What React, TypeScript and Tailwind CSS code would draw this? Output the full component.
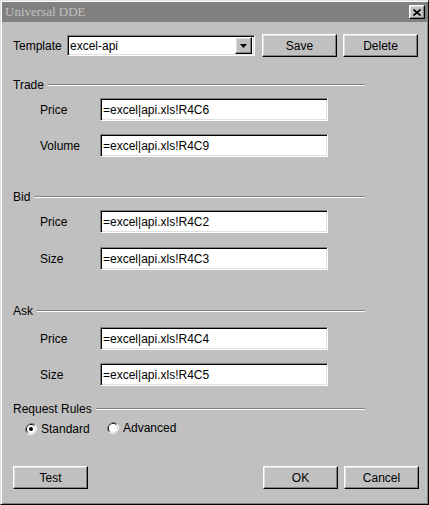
import React from "react";

const font = { fontFamily: '"Liberation Sans", Arial, sans-serif' };

const raised =
  "bg-[#c0c0c0] border border-t-white border-l-white border-r-black border-b-black shadow-[inset_-1px_-1px_#808080,inset_1px_1px_#dfdfdf]";
const sunken =
  "bg-white border border-t-[#808080] border-l-[#808080] border-r-white border-b-white shadow-[inset_1px_1px_#000,inset_-1px_-1px_#dfdfdf]";

function Button({ text, className = "" }: { text: string; className?: string }) {
  return (
    <button
      className={`${raised} h-[23px] w-[75px] text-[12px] text-black flex items-center justify-center ${className}`}
    >
      {text}
    </button>
  );
}

function GroupHeader({ title }: { title: string }) {
  return (
    <div className="flex items-center h-[14px] w-[352px]">
      <span className="text-[12px] text-black leading-none">{title}</span>
      <div className="flex-1 ml-[4px] h-[2px] border-t border-t-[#808080] border-b border-b-white" />
    </div>
  );
}

function Field({ label, value, className = "" }: { label: string; value: string; className?: string }) {
  return (
    <div className={`flex items-center pl-[27px] ${className}`}>
      <span className="w-[60px] text-[12px] text-black">{label}</span>
      <div className={`${sunken} w-[228px] h-[23px] flex items-center pl-[2px] text-[12px] text-black`}>
        {value}
      </div>
    </div>
  );
}

function Radio({ checked, label }: { checked?: boolean; label: string }) {
  return (
    <div className="flex items-center gap-[4px]">
      <svg width="12" height="12" viewBox="0 0 12 12">
        <path d="M10.2 1.8A6 6 0 0 0 1.8 10.2" stroke="#808080" strokeWidth="1" fill="none" />
        <path d="M9.5 2.5A5 5 0 0 0 2.5 9.5" stroke="#000" strokeWidth="1" fill="none" />
        <path d="M1.8 10.2A6 6 0 0 0 10.2 1.8" stroke="#fff" strokeWidth="1" fill="none" />
        <path d="M2.5 9.5A5 5 0 0 0 9.5 2.5" stroke="#dfdfdf" strokeWidth="1" fill="none" />
        <circle cx="6" cy="6" r="4" fill="#fff" />
        {checked && <circle cx="6" cy="6" r="2" fill="#000" />}
      </svg>
      <span className="text-[12px] text-black">{label}</span>
    </div>
  );
}

export default function App() {
  return (
    <div
      style={font}
      className="w-[429px] h-[505px] bg-[#c0c0c0] border border-t-[#dfdfdf] border-l-[#dfdfdf] border-r-black border-b-black shadow-[inset_1px_1px_#fff,inset_-1px_-1px_#808080] p-[1px] flex flex-col"
    >
      {/* Title bar */}
      <div className="h-[20px] bg-[#808080] flex items-center justify-between pl-[3px] pr-[2px]">
        <span
          className="text-[13px] text-[#c0c0c0]"
          style={{ fontFamily: '"Liberation Serif", "Times New Roman", serif' }}
        >
          Universal DDE
        </span>
        <div className={`${raised} w-[16px] h-[14px] flex items-center justify-center`}>
          <svg width="8" height="7" viewBox="0 0 8 7">
            <path d="M0.5 0.5L7.5 6.5M7.5 0.5L0.5 6.5" stroke="#000" strokeWidth="1.6" />
          </svg>
        </div>
      </div>

      <div className="flex flex-col pl-[11px]">
        {/* Template row */}
        <div className="flex items-center mt-[12px]">
          <span className="w-[54px] text-[12px] text-black">Template</span>
          <div className={`${sunken} w-[188px] h-[21px] flex items-center justify-between pl-[2px] pr-[2px]`}>
            <span className="text-[12px] text-black">excel-api</span>
            <div className={`${raised} w-[17px] h-[17px] flex items-center justify-center`}>
              <svg width="7" height="4" viewBox="0 0 7 4">
                <path d="M0 0H7L3.5 4Z" fill="#000" />
              </svg>
            </div>
          </div>
          <Button text="Save" className="ml-[7px]" />
          <Button text="Delete" className="ml-[6px]" />
        </div>

        {/* Trade */}
        <div className="mt-[21px]">
          <GroupHeader title="Trade" />
        </div>
        <Field label="Price" value="=excel|api.xls!R4C6" className="mt-[6px]" />
        <Field label="Volume" value="=excel|api.xls!R4C9" className="mt-[13px]" />

        {/* Bid */}
        <div className="mt-[33px]">
          <GroupHeader title="Bid" />
        </div>
        <Field label="Price" value="=excel|api.xls!R4C2" className="mt-[6px]" />
        <Field label="Size" value="=excel|api.xls!R4C3" className="mt-[14px]" />

        {/* Ask */}
        <div className="mt-[34px]">
          <GroupHeader title="Ask" />
        </div>
        <Field label="Price" value="=excel|api.xls!R4C4" className="mt-[9px]" />
        <Field label="Size" value="=excel|api.xls!R4C5" className="mt-[13px]" />

        {/* Request rules */}
        <div className="mt-[16px]">
          <GroupHeader title="Request Rules" />
        </div>
        <div className="flex items-center mt-[6px] pl-[12px] h-[14px]">
          <div className="w-[82px]">
            <Radio checked label="Standard" />
          </div>
          <div className="-mt-[3px]">
            <Radio label="Advanced" />
          </div>
        </div>

        {/* Bottom buttons */}
        <div className="flex items-center mt-[30px] w-[406px]">
          <Button text="Test" />
          <div className="flex-1" />
          <Button text="OK" />
          <Button text="Cancel" className="ml-[6px]" />
        </div>
      </div>
    </div>
  );
}
